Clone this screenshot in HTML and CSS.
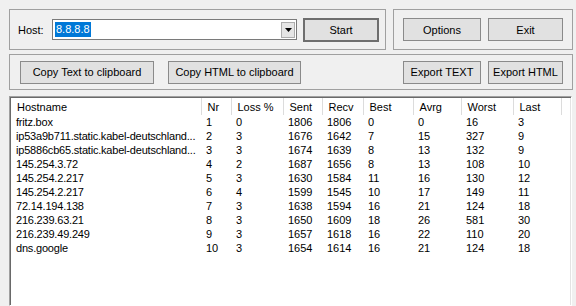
FILE: index.html
```html
<!DOCTYPE html>
<html lang="en">
<head>
    <meta charset="UTF-8">
    <title>WinMTR</title>
    <link rel="stylesheet" href="styles.css">
</head>
<body>
    <div class="window">
        <div class="top-row">
            <div class="group group-host">
                <span class="host-label">Host:</span>
                <div class="combo">
                    <span class="combo-text">8.8.8.8</span>
                    <span class="combo-drop">
                        <svg width="7" height="4" viewBox="0 0 7 4"><path d="M0 0h7L3.5 4z" fill="#000"/></svg>
                    </span>
                </div>
                <button class="btn btn-start">Start</button>
            </div>
            <div class="group group-app">
                <button class="btn btn-options">Options</button>
                <button class="btn btn-exit">Exit</button>
            </div>
        </div>

        <div class="group group-export">
            <button class="btn btn-copy-text">Copy Text to clipboard</button>
            <button class="btn btn-copy-html">Copy HTML to clipboard</button>
            <span class="spacer"></span>
            <button class="btn btn-options">Export TEXT</button>
            <button class="btn btn-exit">Export HTML</button>
        </div>

        <div class="list">
            <table class="hops">
                <colgroup>
                    <col class="c-host"><col class="c-nr"><col class="c-loss"><col class="c-sent"><col class="c-recv">
                    <col class="c-best"><col class="c-avrg"><col class="c-worst"><col class="c-last"><col>
                </colgroup>
                <thead>
                    <tr>
                        <th>Hostname</th><th>Nr</th><th>Loss %</th><th>Sent</th><th>Recv</th>
                        <th>Best</th><th>Avrg</th><th>Worst</th><th>Last</th><th class="filler"></th>
                    </tr>
                </thead>
                <tbody>
                    <tr><td class="host">fritz.box</td><td>1</td><td>0</td><td>1806</td><td>1806</td><td>0</td><td>0</td><td>16</td><td>3</td><td></td></tr>
                    <tr><td class="host">ip53a9b711.static.kabel-deutschland...</td><td>2</td><td>3</td><td>1676</td><td>1642</td><td>7</td><td>15</td><td>327</td><td>9</td><td></td></tr>
                    <tr><td class="host">ip5886cb65.static.kabel-deutschland...</td><td>3</td><td>3</td><td>1674</td><td>1639</td><td>8</td><td>13</td><td>132</td><td>9</td><td></td></tr>
                    <tr><td class="host">145.254.3.72</td><td>4</td><td>2</td><td>1687</td><td>1656</td><td>8</td><td>13</td><td>108</td><td>10</td><td></td></tr>
                    <tr><td class="host">145.254.2.217</td><td>5</td><td>3</td><td>1630</td><td>1584</td><td>11</td><td>16</td><td>130</td><td>12</td><td></td></tr>
                    <tr><td class="host">145.254.2.217</td><td>6</td><td>4</td><td>1599</td><td>1545</td><td>10</td><td>17</td><td>149</td><td>11</td><td></td></tr>
                    <tr><td class="host">72.14.194.138</td><td>7</td><td>3</td><td>1638</td><td>1594</td><td>16</td><td>21</td><td>124</td><td>18</td><td></td></tr>
                    <tr><td class="host">216.239.63.21</td><td>8</td><td>3</td><td>1650</td><td>1609</td><td>18</td><td>26</td><td>581</td><td>30</td><td></td></tr>
                    <tr><td class="host">216.239.49.249</td><td>9</td><td>3</td><td>1657</td><td>1618</td><td>16</td><td>22</td><td>110</td><td>20</td><td></td></tr>
                    <tr><td class="host">dns.google</td><td>10</td><td>3</td><td>1654</td><td>1614</td><td>16</td><td>21</td><td>124</td><td>18</td><td></td></tr>
                </tbody>
            </table>
        </div>
    </div>
</body>
</html>
```

FILE: styles.css
```css
html, body {
    margin: 0;
    height: 306px;
    overflow: hidden;
}
body {
    background-color: #f0f0f0;
    font-family: "Liberation Sans", Arial, sans-serif;
    font-size: 11px;
    color: #000;
}
.window {
    padding: 9px 0 0 9px;
    height: 297px;
    display: flex;
    flex-direction: column;
}
.top-row {
    display: flex;
    gap: 7px;
}
.group {
    box-sizing: border-box;
    border: 1px solid #a0a0a0;
    display: flex;
    align-items: center;
}
.group-host {
    width: 377px;
    height: 41px;
    padding-left: 8px;
}
.group-app {
    width: 180px;
    height: 41px;
    padding-left: 9px;
    gap: 7px;
}
.group-export {
    margin-top: 4px;
    width: 564px;
    height: 36px;
    padding-left: 10px;
    padding-right: 9px;
}
.group-export .btn-copy-html {
    margin-left: 14px;
}
.group-export .btn-exit {
    margin-left: 7px;
}
.spacer {
    flex: 1;
}
.host-label {
    width: 34px;
}
.combo {
    box-sizing: border-box;
    width: 245px;
    height: 21px;
    border: 1px solid #7a7a7a;
    background: #fff;
    display: flex;
    align-items: center;
    padding: 0 1px 0 2px;
}
.combo-text {
    background: #0078d7;
    color: #fff;
    padding: 1px 1px;
    line-height: 13px;
}
.combo-drop {
    margin-left: auto;
    box-sizing: border-box;
    width: 14px;
    height: 16px;
    border: 1px solid #adadad;
    background: #e5e5e5;
    display: flex;
    align-items: center;
    justify-content: center;
}
.btn {
    box-sizing: border-box;
    height: 23px;
    padding: 0;
    background: #e1e1e1;
    border: 1px solid #8a8a8a;
    font-family: inherit;
    font-size: 11px;
    color: #000;
}
.btn-start {
    margin-left: 6px;
    width: 76px;
    height: 24px;
    border: 2px solid #6e6e6e;
}
.btn-options {
    width: 78px;
}
.btn-exit {
    width: 75px;
}
.btn-copy-text {
    width: 134px;
}
.btn-copy-html {
    width: 133px;
}
.list {
    margin-top: 6px;
    width: 563px;
    flex: 1;
    box-sizing: border-box;
    background: #fff;
    border: 1px solid;
    border-color: #a0a0a0 #fff #fff #a0a0a0;
    box-shadow: inset 1px 1px #696969, inset -1px 0 #e3e3e3;
    padding: 1px 0 0 1px;
}
.hops {
    border-collapse: collapse;
    table-layout: fixed;
    width: 559px;
}
.c-host { width: 190px; }
.c-nr { width: 30px; }
.c-loss { width: 52px; }
.c-sent { width: 39px; }
.c-recv { width: 41px; }
.c-best { width: 50px; }
.c-avrg { width: 48px; }
.c-worst { width: 52px; }
.c-last { width: 48px; }
.hops th {
    height: 17px;
    padding: 0 0 0 6px;
    font-weight: normal;
    text-align: left;
    border-right: 1px solid #dcdcdc;
    white-space: nowrap;
}
.hops th.filler {
    border-right: none;
}
.hops td {
    height: 14px;
    line-height: 14px;
    padding: 0 0 0 5px;
    white-space: nowrap;
    overflow: hidden;
}
.hops td.host {
    letter-spacing: -0.2px;
}
```
